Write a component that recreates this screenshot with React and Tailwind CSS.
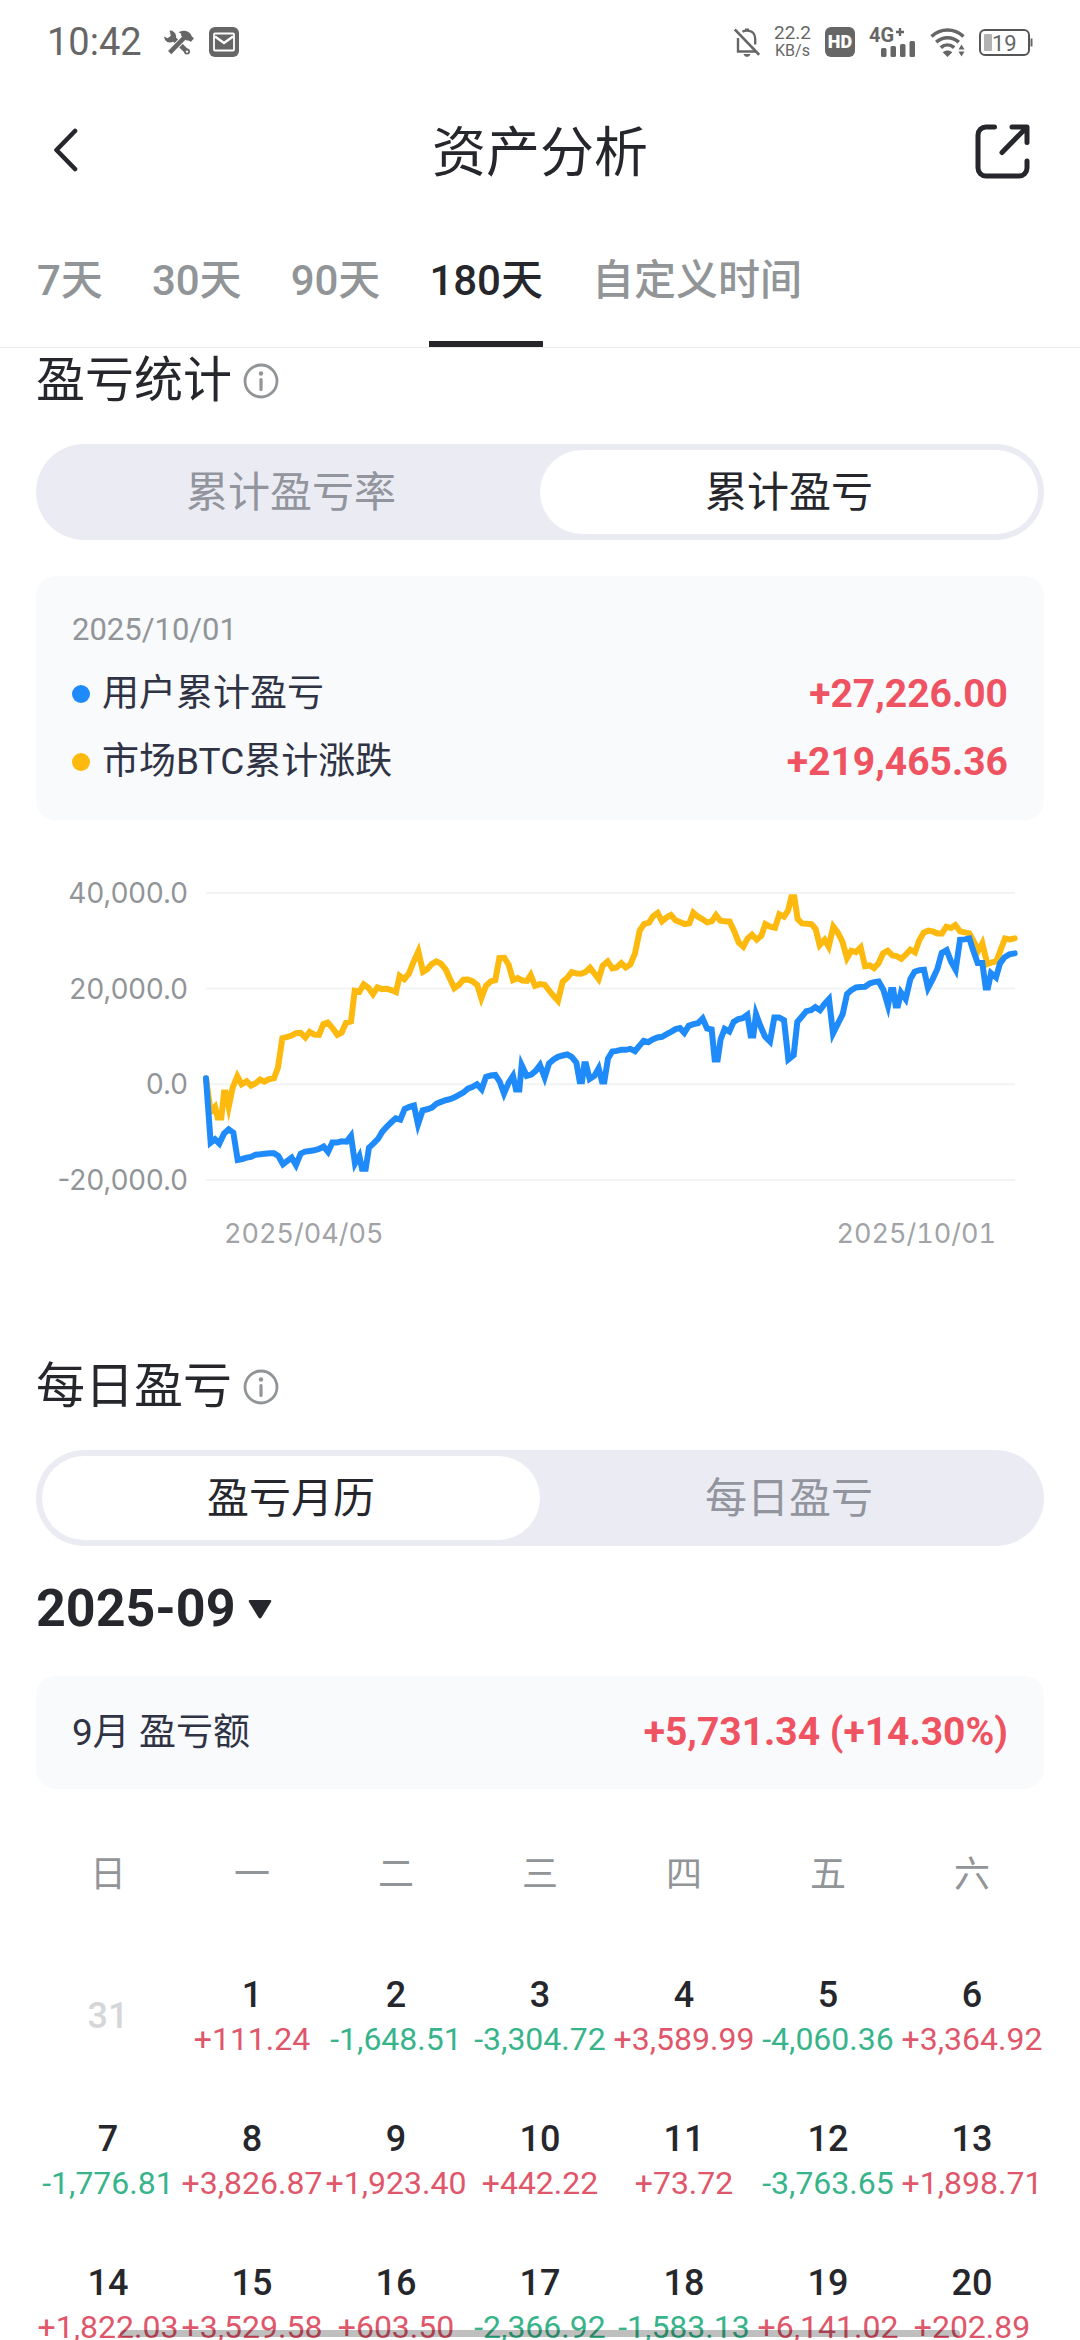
import { useState } from 'react'
import clsx from 'clsx'

const ranges = ['7天', '30天', '90天', '180天', '自定义时间']

const weekdays = ['日', '一', '二', '三', '四', '五', '六']

const weeks = [
  [
    [31, null], [1, '+111.24'], [2, '-1,648.51'], [3, '-3,304.72'],
    [4, '+3,589.99'], [5, '-4,060.36'], [6, '+3,364.92'],
  ],
  [
    [7, '-1,776.81'], [8, '+3,826.87'], [9, '+1,923.40'], [10, '+442.22'],
    [11, '+73.72'], [12, '-3,763.65'], [13, '+1,898.71'],
  ],
  [
    [14, '+1,822.03'], [15, '+3,529.58'], [16, '+603.50'], [17, '-2,366.92'],
    [18, '-1,583.13'], [19, '+6,141.02'], [20, '+202.89'],
  ],
]

const yTicks = ['40,000.0', '20,000.0', '0.0', '-20,000.0']

// chart space: x 78-2505, y 67 (40,000) - 927 (-20,000)
const marketLine =
  '78,622 92,722 105,708 113,740 124,740 132,665 137,665 146,708 158,650 172,616 185,640 200,631 213,644 226,638 240,626 253,632 267,625 282,622 294,590 307,502 320,499 335,494 348,487 362,486 376,500 389,483 403,491 417,492 430,460 443,455 457,471 472,492 485,485 498,456 513,452 524,360 538,363 551,341 565,351 579,370 592,350 606,355 620,354 634,358 648,364 659,315 673,325 687,308 700,275 715,242 729,303 742,295 755,280 769,272 783,279 797,296 810,325 823,352 837,342 850,327 864,326 878,332 892,343 904,382 918,345 932,332 946,328 958,262 973,261 986,282 999,328 1013,322 1027,329 1041,330 1052,313 1065,345 1080,340 1094,342 1108,360 1121,376 1134,390 1148,333 1162,321 1175,304 1190,308 1203,309 1216,304 1230,291 1243,308 1256,325 1268,285 1283,272 1297,293 1310,290 1324,277 1337,290 1351,281 1365,248 1379,180 1392,160 1407,156 1419,137 1433,127 1446,152 1460,140 1473,133 1487,149 1500,154 1514,160 1528,158 1540,126 1554,138 1568,146 1581,155 1595,152 1608,133 1621,150 1635,152 1649,153 1662,180 1676,215 1690,228 1703,203 1716,192 1730,207 1744,195 1756,160 1770,168 1785,171 1798,131 1812,138 1824,120 1834,80 1843,80 1853,145 1866,158 1880,159 1894,160 1907,175 1919,223 1934,207 1946,228 1960,168 1973,185 1987,212 2001,262 2014,240 2028,244 2042,230 2055,286 2069,284 2082,292 2096,277 2109,248 2123,240 2137,254 2150,256 2164,264 2178,251 2191,237 2205,245 2217,210 2231,186 2245,180 2258,182 2272,188 2286,188 2299,168 2313,172 2326,163 2340,182 2354,185 2368,188 2380,210 2395,240 2407,218 2422,280 2435,275 2449,272 2461,240 2475,203 2489,206 2504,203'

const userLine =
  '78,622 92,815 105,805 118,818 132,788 146,775 160,785 173,867 187,864 200,860 213,858 227,851 241,850 255,848 268,847 282,847 295,855 309,880 322,870 335,860 348,882 362,848 375,842 390,840 403,838 417,834 431,827 444,843 457,815 471,815 485,811 500,812 513,795 525,878 538,855 546,893 557,893 567,830 580,818 594,804 607,782 620,768 634,754 647,742 661,746 674,714 688,708 702,704 714,760 728,718 742,715 756,710 770,698 783,693 797,688 810,685 824,679 837,672 851,664 864,653 878,648 891,640 905,655 918,618 932,614 946,612 959,632 972,668 986,635 999,615 1008,656 1018,656 1025,583 1040,615 1054,611 1067,600 1080,583 1094,620 1107,578 1121,566 1134,558 1148,554 1162,551 1175,558 1189,575 1199,631 1206,631 1213,580 1218,580 1229,624 1243,615 1256,592 1266,632 1273,632 1284,563 1297,542 1310,540 1324,537 1337,537 1351,534 1365,541 1378,525 1391,510 1405,514 1418,506 1432,500 1446,498 1460,490 1473,483 1487,475 1500,472 1513,486 1526,465 1540,460 1554,457 1568,443 1581,473 1595,476 1604,566 1613,566 1622,505 1634,474 1648,482 1661,453 1675,445 1688,442 1702,432 1712,494 1720,494 1728,430 1741,465 1755,497 1770,512 1783,440 1797,440 1812,448 1825,566 1841,553 1852,453 1865,438 1879,421 1893,418 1906,409 1920,418 1933,400 1947,385 1959,488 1973,460 1988,430 2001,370 2014,358 2028,350 2042,349 2055,348 2069,338 2082,334 2096,332 2110,357 2124,405 2133,358 2140,358 2147,404 2154,404 2163,365 2177,385 2191,325 2204,303 2218,298 2232,297 2244,352 2258,325 2272,295 2285,247 2300,238 2313,272 2327,297 2340,207 2354,206 2368,203 2380,240 2393,277 2407,277 2417,350 2424,350 2433,307 2448,320 2460,278 2473,260 2488,251 2504,248'

function ToolsIcon() {
  return (
    <svg width="30" height="25" viewBox="0 0 30 25" fill="none" aria-hidden="true">
      {/* wrench */}
      <path d="M9 8l14.5 14" stroke="#666" strokeWidth="5" />
      <path d="M5.5 0.6a6 6 0 1 1-5.4 6l3.4 1.7 3.2-2.3-.4-2.8z" fill="#666" />
      <circle cx="23" cy="21.5" r="3" fill="#666" />
      <circle cx="23" cy="21.6" r="1.2" fill="#fff" />
      {/* hammer */}
      <path d="M20.5 7.5L7.3 21" stroke="#fff" strokeWidth="6.5" />
      <path d="M21.5 6.5L7.3 21" stroke="#666" strokeWidth="4.6" strokeLinecap="square" />
      <path d="M14.5 2.2C19 -.2 24.4 0 27 4.6c.4 1.6 1 2.3 3 3.6l-3.2 3.8c-1.5-1.4-2.4-1.8-4.4-1.4L17.2 5.8c.4-1.8-.6-3-2.7-3.6z" fill="#666" />
    </svg>
  )
}

function MailIcon() {
  return (
    <svg width="30" height="30" viewBox="0 0 30 30" aria-hidden="true">
      <rect width="30" height="30" rx="6" fill="#666" />
      <rect x="5" y="6.5" width="20" height="17" rx="1" fill="none" stroke="#fff" strokeWidth="1.8" />
      <path d="M6 9.5l9 6.5 9-6.5" fill="none" stroke="#fff" strokeWidth="2.4" />
    </svg>
  )
}

function MutedBellIcon() {
  return (
    <svg width="26" height="29" viewBox="0 0 26 29" fill="none" stroke="#666" strokeWidth="2.4" aria-hidden="true">
      <path d="M4 10v13.5h18" />
      <path d="M8.5 3.8C10 2.7 11 2.6 13 2.6c5.5 0 8.2 3.8 8.2 8.4v5.5" />
      <path d="M13 0.5v2" strokeWidth="4" />
      <path d="M0.8 1.5l24.4 25.3" strokeWidth="2.6" />
      <path d="M9.5 26h7c-.6 1.9-1.8 2.8-3.5 2.8s-2.9-.9-3.5-2.8z" fill="#666" stroke="none" />
    </svg>
  )
}

function SignalIcon() {
  return (
    <svg width="47" height="30" viewBox="0 0 47 30" fill="#666" className="overflow-visible font-bold" aria-label="4G+">
      <text x="0" y="15" fontSize="20">4G</text>
      <path d="M27 5h8M31 1v8" stroke="#666" strokeWidth="2.4" />
      <rect x="12" y="21" width="5.5" height="9" rx="1.5" />
      <rect x="21.5" y="19" width="5.5" height="11" rx="1.5" />
      <rect x="31" y="17" width="5.5" height="13" rx="1.5" />
      <rect x="40.5" y="14" width="5.5" height="16" rx="1.5" />
    </svg>
  )
}

function WifiIcon() {
  return (
    <svg width="35" height="29" viewBox="0 0 35 29" fill="none" stroke="#666" strokeWidth="3.6" aria-hidden="true">
      <path d="M1.5 8.5c9.5-8.6 22.5-8.6 32 0" />
      <path d="M6.2 14.2c6.8-6 15.8-6 22.6 0" />
      <path d="M10.8 19.7c4-3.6 9.4-3.6 13.4 0" />
      <path d="M12.7 24.2c3-2.2 6.6-2.2 9.6 0L17.5 29z" fill="#666" stroke="none" />
      <path d="M28.5 21.5l3-5 3 5zM28.5 23.5l3 5 3-5z" fill="#666" stroke="none" />
    </svg>
  )
}

function BatteryIcon() {
  return (
    <svg width="54" height="27" viewBox="0 0 54 27" aria-label="19%">
      <rect x="1" y="1" width="49" height="25" rx="5" fill="none" stroke="#555" strokeWidth="2" />
      <rect x="5" y="5" width="8" height="17" rx="1" fill="#b3b3b3" />
      <path d="M52.5 9.5v8" stroke="#666" strokeWidth="2" />
      <text x="13" y="22" fontSize="22" fill="#666">19</text>
    </svg>
  )
}

function InfoButton({ label }) {
  return (
    <button type="button" aria-label={label}>
      <svg width="36" height="36" viewBox="0 0 36 36" fill="none" stroke="#929598" strokeWidth="2.8">
        <circle cx="18" cy="18" r="16" />
        <path d="M18 16.5v10" strokeWidth="3.2" strokeLinecap="round" />
        <circle cx="18" cy="10.5" r="2.2" fill="#929598" stroke="none" />
      </svg>
    </button>
  )
}

function SectionTitle({ children }) {
  return (
    <div className="flex items-center gap-[11px] h-[66px]">
      <h2 className="text-[49px] leading-[66px]">{children}</h2>
      <InfoButton label={`${children}说明`} />
    </div>
  )
}

function Segmented({ items, value, onChange }) {
  return (
    <div className="mt-[30px] grid grid-cols-2 h-24 p-1.5 rounded-full bg-[#ebecf3]">
      {items.map((item) => (
        <button
          key={item}
          type="button"
          aria-pressed={item === value}
          onClick={() => onChange(item)}
          className={clsx(
            'pt-0.5 rounded-full text-[42px] leading-[60px]',
            item === value ? 'bg-white text-[#26272c]' : 'text-[#92959d]'
          )}
        >
          {item}
        </button>
      ))}
    </div>
  )
}

function LegendRow({ dot, label, amount }) {
  return (
    <div className="flex items-center h-[68px]">
      <span className={clsx('size-[18px] rounded-full mr-3', dot)} />
      <span className="text-[37px] text-[#2f3344]">{label}</span>
      <span className="ml-auto text-[39px] font-bold text-[#ef5261]">{amount}</span>
    </div>
  )
}

function ProfitChart() {
  return (
    <div className="mt-[73px] font-[Inter,sans-serif] text-[#929598]">
      <div className="flex h-[287px]">
        <ul className="w-[152px] -my-5 flex flex-col justify-between text-right text-[28px] leading-10">
          {yTicks.map((tick) => (
            <li key={tick}>{tick}</li>
          ))}
        </ul>
        <svg
          className="ml-[18px] mr-[29px] flex-1 min-w-0 h-full overflow-visible"
          viewBox="78 67 2427 860"
          preserveAspectRatio="none"
          fill="none"
          role="img"
          aria-label="累计盈亏走势"
        >
          <path
            d="M78 67H2505M78 353H2505M78 640H2505M78 927H2505"
            stroke="#f2f3f4"
            strokeWidth="2"
            vectorEffect="non-scaling-stroke"
          />
          <polyline points={marketLine} stroke="#fdb90e" strokeWidth="6" strokeMiterlimit="8" strokeLinecap="round" vectorEffect="non-scaling-stroke" />
          <polyline points={userLine} stroke="#1f8bfb" strokeWidth="6" strokeMiterlimit="8" strokeLinecap="round" vectorEffect="non-scaling-stroke" />
        </svg>
      </div>
      <div className="mt-[34px] pl-[188px] pr-12 flex justify-between text-[27px] leading-10 tabular-nums text-[#a1a3a6]">
        <span>2025/04/05</span>
        <span>2025/10/01</span>
      </div>
    </div>
  )
}

function DayCell({ day, amount }) {
  if (!amount) {
    return <td className="h-36 p-0 text-4xl font-medium text-[#d5d6d8]">{day}</td>
  }
  return (
    <td className="h-36 p-0 whitespace-nowrap">
      <div className="text-4xl leading-[46px] font-medium">{day}</div>
      <div className={clsx('text-[32px] leading-[42px]', amount[0] === '+' ? 'text-[#e0566a]' : 'text-[#38b48b]')}>
        {amount}
      </div>
    </td>
  )
}

export default function App() {
  const [range, setRange] = useState('180天')
  const [stat, setStat] = useState('累计盈亏')
  const [daily, setDaily] = useState('盈亏月历')

  return (
    <div className="h-screen flex flex-col bg-white text-[#26272c] font-[Roboto,'Noto_Sans_CJK_SC',sans-serif]">
      {/* Status bar */}
      <div className="shrink-0 h-[84px] px-[47px] flex items-center text-[#666]">
        <span className="text-[38px]">10:42</span>
        <div className="ml-[22px] flex items-center gap-[15px]">
          <ToolsIcon />
          <MailIcon />
        </div>
        <div className="ml-auto flex items-center gap-[14px]">
          <MutedBellIcon />
          <div className="w-[37px] flex flex-col items-center">
            <span className="text-[19px] leading-[18px]">22.2</span>
            <span className="text-base leading-[18px]">KB/s</span>
          </div>
          <span className="size-[30px] rounded-md bg-[#666] text-white text-lg leading-[30px] font-black text-center">HD</span>
          <SignalIcon />
          <WifiIcon />
          <BatteryIcon />
        </div>
      </div>

      {/* Title bar */}
      <header className="shrink-0 h-[136px] px-12 flex items-center justify-between">
        <button type="button" aria-label="返回" className="w-[60px]">
          <svg width="36" height="48" viewBox="0 0 36 48" fill="none" stroke="#26272c" strokeWidth="4.6" strokeLinecap="round" strokeLinejoin="round">
            <path d="M27 3L8.5 22L27 41" />
          </svg>
        </button>
        <h1 className="pt-1 text-[54px] leading-[72px]">资产分析</h1>
        <button type="button" aria-label="分享" className="w-[60px] flex justify-end">
          <svg width="60" height="60" viewBox="0 0 60 60" fill="none" stroke="#26272c" strokeWidth="5" strokeLinecap="round" strokeLinejoin="round">
            <path d="M22.5 5H14a8 8 0 0 0-8 8v33a8 8 0 0 0 8 8h33a8 8 0 0 0 8-8V39" />
            <path d="M40 5h15v15.5M54 6L30 30.5" />
          </svg>
        </button>
      </header>

      {/* Range tabs */}
      <nav className="shrink-0 px-[37px] flex gap-[49px] border-b border-[#ececee]">
        {ranges.map((item) => (
          <button
            key={item}
            type="button"
            onClick={() => setRange(item)}
            className={clsx(
              'h-[127px] border-b-[6px] text-[42px] font-medium',
              item === range ? 'border-[#26272c]' : 'border-transparent text-[#929598]'
            )}
          >
            {item}
          </button>
        ))}
      </nav>

      <main className="flex-1 min-h-0 overflow-y-auto [scrollbar-width:none] px-9">
        <section>
          <SectionTitle>盈亏统计</SectionTitle>
          <Segmented items={['累计盈亏率', '累计盈亏']} value={stat} onChange={setStat} />
          <div className="mt-9 px-9 py-6 rounded-[20px] bg-[#f8fafc]">
            <p className="text-[31px] leading-[60px] text-[#929598]">2025/10/01</p>
            <LegendRow dot="bg-[#1f8bfb]" label="用户累计盈亏" amount="+27,226.00" />
            <LegendRow dot="bg-[#fdb90e]" label="市场BTC累计涨跌" amount="+219,465.36" />
          </div>
          <ProfitChart />
        </section>

        <section className="mt-[100px]">
          <SectionTitle>每日盈亏</SectionTitle>
          <Segmented items={['盈亏月历', '每日盈亏']} value={daily} onChange={setDaily} />
          <label className="mt-7 w-fit flex items-center gap-3">
            <select aria-label="月份" className="appearance-none h-[70px] text-[52px] leading-[70px] font-bold bg-transparent">
              <option>2025-09</option>
            </select>
            <svg width="24" height="20" viewBox="0 0 24 20" aria-hidden="true">
              <path d="M2 1h20q2 0 1 2l-9.5 15.5q-1.5 2-3 0L1 3q-1-2 1-2z" fill="#26272c" />
            </svg>
          </label>
          <div className="mt-8 px-9 h-[113px] flex items-center justify-between rounded-[20px] bg-[#f8fafc]">
            <span className="text-[37px] text-[#2f3344]">9月 盈亏额</span>
            <span className="text-[39px] font-bold text-[#ef5261]">+5,731.34 (+14.30%)</span>
          </div>
          <table className="mt-4 w-full table-fixed border-collapse text-center">
            <thead>
              <tr>
                {weekdays.map((d) => (
                  <th key={d} className="h-[139px] p-0 text-4xl font-normal text-[#929598]">{d}</th>
                ))}
              </tr>
            </thead>
            <tbody>
              {weeks.map((week) => (
                <tr key={week[0][0]}>
                  {week.map(([day, amount]) => (
                    <DayCell key={day} day={day} amount={amount} />
                  ))}
                </tr>
              ))}
            </tbody>
          </table>
        </section>
      </main>

      {/* Gesture bar */}
      <div className="fixed bottom-[3px] left-1/2 -translate-x-1/2 w-7/9 h-[7px] rounded-full bg-black/25" />
    </div>
  )
}
